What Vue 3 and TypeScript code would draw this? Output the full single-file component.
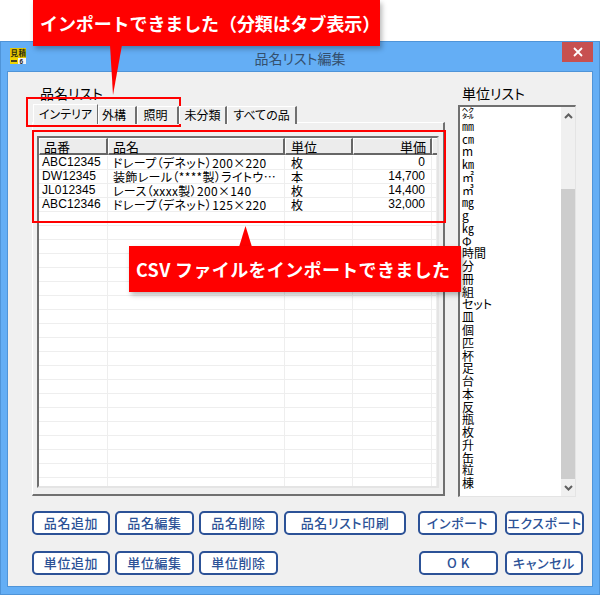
<script setup lang="ts">
interface Row { code: string; name: string; unit: string; price: string }
const tabs = ['インテリア', '外構', '照明', '未分類', 'すべての品']
const rows: Row[] = [
  { code: 'ABC12345', name: 'ドレープ(デネット)200×220', unit: '枚', price: '0' },
  { code: 'DW12345', name: '装飾レール(****製)ライトウ…', unit: '本', price: '14,700' },
  { code: 'JL012345', name: 'レース(xxxx製)200×140', unit: '枚', price: '14,400' },
  { code: 'ABC12346', name: 'ドレープ(デネット)125×220', unit: '枚', price: '32,000' },
].map((r) => ({ ...r, name: r.name.replace(/\(/g, '\uFF08').replace(/\)/g, '\uFF09') }))
const emptyRows = Array.from({ length: 21 }, (_, i) => i)
const units = ['㌶', '㎜', '㎝', 'm', '㎞', '㎡', '㎥', '㎎', 'g', '㎏', 'Φ', '時間', '分', '冊', '組', 'セット', '皿', '個', '匹', '杯', '足', '台', '本', '反', '瓶', '枚', '升', '缶', '粒', '棟']
const row1 = [
  { t: '品名追加', c: 'w78' }, { t: '品名編集', c: 'w79' }, { t: '品名削除', c: 'w79' },
  { t: '品名リスト印刷', c: 'w122' },
]
const row2 = ['単位追加', '単位編集', '単位削除']
const topCallout = 'インポートできました\uFF08分類はタブ表示\uFF09'
</script>

<template>
  <div class="page">
    <div class="window">
      <div class="titlebar">
        <svg class="appicon" width="16" height="16" viewBox="0 0 16 16">
          <rect width="16" height="16" fill="#e6c800" />
          <rect x="8" y="10" width="8" height="6" fill="#f2f2f2" />
          <rect x="0" y="10" width="8" height="6" fill="#f0d400" />
          <rect x="1" y="12" width="6" height="2" fill="#4a4420" />
          <text x="0.5" y="8" class="ik">見</text>
          <text x="8.5" y="8" class="ik">積</text>
          <text x="9.5" y="15.5" class="i6">6</text>
        </svg>
        <span class="title">品名リスト編集</span>
        <div class="close">
          <svg width="10" height="10" viewBox="0 0 10 10"><path d="M1 1l8 8M9 1l-8 8" stroke="#fff" stroke-width="1.8" /></svg>
        </div>
      </div>
      <div class="client">
        <div class="main">
          <section class="left">
            <div class="label">品名リスト</div>
            <div class="tabs">
              <div v-for="(t, i) in tabs" :key="t" class="tab" :class="['tab' + i, { active: i === 0 }]">{{ t }}</div>
            </div>
            <div class="tabpanel">
              <div class="grid">
                <div class="ghead">
                  <div class="hc c1">品番</div>
                  <div class="hc c2">品名</div>
                  <div class="hc c3">単位</div>
                  <div class="hc c4">単価</div>
                  <div class="hc c5"></div>
                </div>
                <div class="gbody">
                  <div v-for="r in rows" :key="r.code" class="grow">
                    <div class="gc c1 latin">{{ r.code }}</div>
                    <div class="gc c2">{{ r.name }}</div>
                    <div class="gc c3">{{ r.unit }}</div>
                    <div class="gc c4 num latin">{{ r.price }}</div>
                    <div class="gc c5"></div>
                  </div>
                  <div v-for="n in emptyRows" :key="n" class="grow">
                    <div class="gc c1"></div>
                    <div class="gc c2"></div>
                    <div class="gc c3"></div>
                    <div class="gc c4"></div>
                    <div class="gc c5"></div>
                  </div>
                </div>
              </div>
            </div>
          </section>
          <section class="right">
            <div class="label rlabel">単位リスト</div>
            <div class="listbox">
              <div class="items">
                <div v-for="u in units" :key="u" class="item">{{ u }}</div>
              </div>
              <div class="sbar">
                <div class="arrow">
                  <svg width="9" height="6" viewBox="0 0 9 6"><path d="M1 5l3.5-3.5L8 5" fill="none" stroke="#606060" stroke-width="2" /></svg>
                </div>
                <div class="strack"><div class="sthumb"></div></div>
                <div class="arrow">
                  <svg width="9" height="6" viewBox="0 0 9 6"><path d="M1 1l3.5 3.5L8 1" fill="none" stroke="#606060" stroke-width="2" /></svg>
                </div>
              </div>
            </div>
          </section>
        </div>
        <div class="btnrow">
          <div class="btngroup">
            <button v-for="b in row1" :key="b.t" class="btn" :class="b.c">{{ b.t }}</button>
          </div>
          <div class="btngroup end">
            <button class="btn w79">インポート</button>
            <button class="btn w79 gap8">エクスポート</button>
          </div>
        </div>
        <div class="btnrow second">
          <div class="btngroup">
            <button v-for="(b, i) in row2" :key="b" class="btn" :class="i === 0 ? 'w78' : 'w79'">{{ b }}</button>
          </div>
          <div class="btngroup end inset">
            <button class="btn w79">O K</button>
            <button class="btn w78 gap7">キャンセル</button>
          </div>
        </div>
      </div>
    </div>

    <div class="callout top">{{ topCallout }}</div>
    <svg class="pointer p1" width="12" height="50" viewBox="0 0 12 50"><path d="M0 0h12L3 50z" fill="#f00" /></svg>
    <div class="outline o1"></div>
    <div class="outline o2"></div>
    <svg class="pointer p2" width="13" height="21" viewBox="0 0 13 21"><path d="M6.5 0L13 21H0z" fill="#f00" /></svg>
    <div class="callout mid">CSV ファイルをインポートできました</div>
  </div>
</template>

<style>
html, body { margin: 0; background: #fff; }
</style>

<style scoped>
.page {
  position: relative;
  width: 600px;
  height: 596px;
  padding-top: 41px;
  box-sizing: border-box;
  overflow: hidden;
  background: #fff;
  font-family: "Noto Sans CJK JP", "Liberation Sans", sans-serif;
  font-feature-settings: "palt";
  color: #000;
}
.window {
  height: 554px;
  box-sizing: border-box;
  background: #64aef5;
  border: 1px solid #4f94d8;
  padding: 0 6px 7px;
  display: flex;
  flex-direction: column;
}
.titlebar {
  height: 29px;
  display: flex;
  align-items: center;
  position: relative;
  justify-content: center;
  flex: none;
}
.appicon { position: absolute; left: 3px; top: 6px; }
.ik { font-size: 7.5px; font-weight: 700; fill: #2a2a10; }
.i6 { font-size: 6.5px; font-weight: 700; fill: #222; font-family: "Liberation Sans", sans-serif; }
.title { font-size: 14px; color: #34506e; margin-top: 2px; }
.close {
  position: absolute;
  right: 0;
  top: 0;
  width: 31px;
  height: 20px;
  background: #c75050;
  display: flex;
  align-items: center;
  justify-content: center;
}
.client {
  flex: 1;
  background: #f0f0f0;
  border: 1px solid #4f94d8;
  padding: 13px 8px 0 24px;
  box-sizing: border-box;
  display: flex;
  flex-direction: column;
}
.main { display: flex; height: 412px; flex: none; }
.left { width: 426px; flex: none; display: flex; flex-direction: column; }
.label { font-size: 14px; line-height: 17px; height: 17px; padding-left: 8px; }
.tabs { display: flex; height: 19px; margin-top: 3px; padding-left: 1px; align-items: flex-end; position: relative; z-index: 1; font-size: 12px; }
.tab {
  height: 18px;
  line-height: 16px;
  box-sizing: border-box;
  text-align: center;
  background: #f0f0f0;
  border-top: 1px solid #fff;
  border-left: 1px solid #fff;
  border-right: 2px solid #707070;
  white-space: nowrap;
}
.tab.active { height: 20px; line-height: 17px; border-right-width: 1px; }
.tab0 { width: 65px; }
.tab1 { width: 39px; padding-right: 6px; }
.tab2 { width: 42px; padding-right: 4px; }
.tab3 { width: 48px; }
.tab4 { width: 70px; }
.tabpanel {
  width: 413px;
  height: 374px;
  margin-top: -2px;
  box-sizing: border-box;
  background: #f0f0f0;
  border: 1px solid #fff;
  border-right: 2px solid #707070;
  border-bottom: 2px solid #707070;
  padding: 13px 4px 6px 4px;
}
.grid {
  height: 100%;
  box-sizing: border-box;
  border: 2px solid #6f6f6f;
  border-right-color: #e4e4e4;
  border-bottom-color: #e4e4e4;
  background: #fff;
  overflow: hidden;
}
.ghead { display: flex; height: 17px; background: #ececec; }
.hc {
  box-sizing: border-box;
  height: 17px;
  line-height: 15px;
  font-size: 13px;
  border-top: 1px solid #fff;
  border-left: 1px solid #fff;
  border-right: 2px solid #666;
  border-bottom: 2px solid #666;
}
.hc.c1 { padding-left: 4px; }
.hc.c2 { padding-left: 4px; }
.hc.c3 { padding-left: 5px; }
.hc.c4 { text-align: right; padding-right: 4px; }
.hc.c5 { border-right: 0; }
.c1 { width: 69px; flex: none; }
.c2 { width: 177px; flex: none; }
.c3 { width: 68px; flex: none; }
.c4 { width: 79px; flex: none; }
.c5 { flex: 1; }
.gbody { padding-top: 1px; }
.grow { display: flex; height: 14px; border-bottom: 1px solid #eeeeee; box-sizing: border-box; }
.gc {
  box-sizing: border-box;
  font-size: 12px;
  line-height: 13px;
  border-right: 1px solid #eeeeee;
  white-space: nowrap;
}
.gc.c1 { padding-left: 3px; letter-spacing: .1px; }
.gc.c2 { padding-left: 5px; letter-spacing: .35px; }
.gc.c3 { padding-left: 6px; }
.gc.num { text-align: right; padding-right: 6px; }
.latin { font-family: "Liberation Sans", sans-serif; }
.right { flex: none; width: 118px; display: flex; flex-direction: column; }
.rlabel { padding-left: 4px; margin-bottom: 3px; }
.listbox {
  width: 118px;
  height: 392px;
  box-sizing: border-box;
  background: #fff;
  border: 1px solid #fff;
  border-top: 2px solid #707070;
  border-left: 2px solid #707070;
  border-right-color: #e4e4e4;
  border-bottom-color: #e4e4e4;
  display: flex;
  overflow: hidden;
}
.items { flex: 1; padding: 0 0 0 2px; font-size: 12px; line-height: 12.77px; }
.item { height: 12.77px; white-space: nowrap; }
.sbar { width: 14px; flex: none; display: flex; flex-direction: column; background: #f0f0f0; }
.arrow { height: 17px; flex: none; display: flex; align-items: center; justify-content: center; }
.strack { flex: 1; padding-top: 65px; }
.sthumb { height: 100%; background: #cdcdcd; }
.btnrow { display: flex; justify-content: space-between; margin-top: 14px; }
.btnrow.second { margin-top: 16px; }
.btngroup { display: flex; gap: 5px; }
.btngroup.end { gap: 0; }
.btngroup.inset { margin-right: 1px; }
.btn {
  height: 24px;
  box-sizing: border-box;
  padding: 0;
  background: #fff;
  border: 2px solid #2c5297;
  border-radius: 5px;
  color: #2c5297;
  font-family: inherit;
  font-feature-settings: "palt";
  font-size: 13px;
  font-weight: 500;
  letter-spacing: .6px;
  line-height: 18px;
}
.w78 { width: 78px; }
.w79 { width: 79px; }
.w122 { width: 122px; margin-left: 1px; }
.gap7 { margin-left: 7px; }
.gap8 { margin-left: 8px; }
.callout {
  position: absolute;
  background: #f00;
  color: #fff;
  font-weight: 700;
  font-size: 18px;
  font-feature-settings: normal;
  display: flex;
  align-items: center;
  white-space: nowrap;
  box-sizing: border-box;
  padding-left: 7px;
  box-shadow: 2px 3px 5px rgba(0, 0, 0, .28);
}
.callout.top { left: 33px; top: 0; width: 347px; height: 46px; letter-spacing: -.1px; }
.callout.mid { left: 129px; top: 246px; width: 332px; height: 46px; letter-spacing: .35px; }
.pointer { position: absolute; }
.p1 { left: 110px; top: 45px; }
.p2 { left: 239px; top: 226px; }
.outline { position: absolute; border: 2px solid #f00; box-sizing: border-box; }
.o1 { left: 26px; top: 97px; width: 155px; height: 30px; }
.o2 { left: 32px; top: 130px; width: 414px; height: 93px; }
</style>
